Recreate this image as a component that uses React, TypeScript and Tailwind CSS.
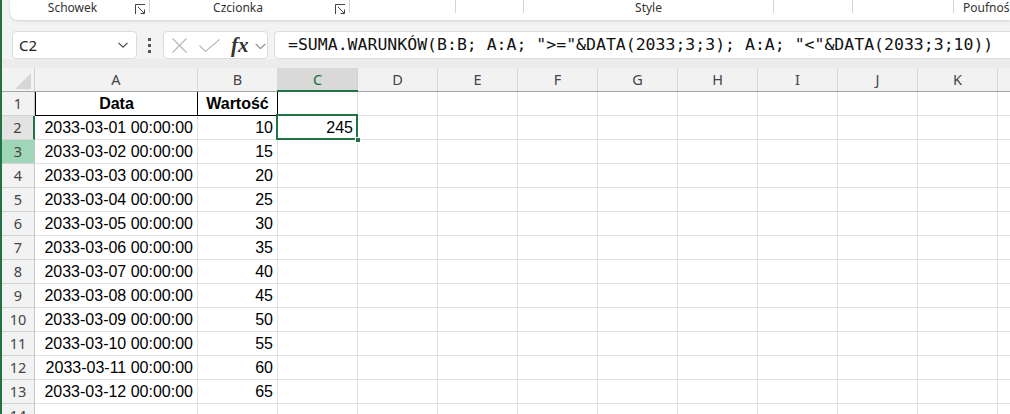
import type { ReactNode } from 'react'

const COLS = [
  { key: 'A', w: 'w-[163px]' },
  { key: 'B', w: 'w-[80px]' },
  { key: 'C', w: 'w-[80px]' },
  { key: 'D', w: 'w-[80px]' },
  { key: 'E', w: 'w-[80px]' },
  { key: 'F', w: 'w-[80px]' },
  { key: 'G', w: 'w-[80px]' },
  { key: 'H', w: 'w-[80px]' },
  { key: 'I', w: 'w-[80px]' },
  { key: 'J', w: 'w-[80px]' },
  { key: 'K', w: 'w-[80px]' },
  { key: 'L', w: 'w-[80px]' },
]

const rows = Array.from({ length: 12 }, (_, i) => ({
  date: `2033-03-${String(i + 1).padStart(2, '0')} 00:00:00`,
  value: 10 + i * 5,
}))

function Launcher() {
  return (
    <svg width="11" height="11" viewBox="0 0 11 11" className="mt-[4px] shrink-0" fill="none" stroke="#444" strokeWidth="1">
      <path d="M0.5 10V0.5H10" />
      <path d="M3 3L9.5 9.5" />
      <path d="M9.5 5.5V9.5H5.5" />
    </svg>
  )
}

function Sep() {
  return <span className="h-[13px] w-px shrink-0 bg-[#d4d4d4]" />
}

function Ribbon() {
  return (
    <div className="ml-[8px] flex h-[20px] shrink-0 items-start overflow-hidden rounded-bl-[8px] bg-white text-[12px] leading-[16px] text-[#333] shadow-[0_1px_3px_rgba(0,0,0,0.14)] font-['Noto_Sans',sans-serif]">
      <div className="w-[125px] shrink-0 text-center">Schowek</div>
      <Launcher />
      <div className="w-[3px] shrink-0" />
      <Sep />
      <div className="w-[176px] shrink-0 text-center">Czcionka</div>
      <div className="w-[9px] shrink-0" />
      <Launcher />
      <div className="w-[3px] shrink-0" />
      <Sep />
      <div className="w-[105px] shrink-0" />
      <Sep />
      <div className="w-[67px] shrink-0" />
      <Sep />
      <div className="w-[249px] shrink-0 text-center">Style</div>
      <Sep />
      <div className="w-[78px] shrink-0" />
      <Sep />
      <div className="w-[100px] shrink-0" />
      <Sep />
      <div className="shrink-0 whitespace-nowrap pl-[9px]">Poufność</div>
    </div>
  )
}

function Chevron({ color, w }: { color: string; w: number }) {
  return (
    <svg width={w} height={w / 2 + 1} viewBox="0 0 10 6" fill="none" stroke={color} strokeWidth="1.1">
      <path d="M0.5 0.8L5 5.2L9.5 0.8" />
    </svg>
  )
}

function FormulaBar() {
  return (
    <div className="mt-[11px] flex h-[28px] shrink-0 items-stretch">
      <div className="ml-[10px] flex w-[125px] shrink-0 items-center justify-between rounded-[4px] border border-[#dcdcdc] bg-white pl-[6px] pr-[8px] text-[15px] text-[#222] font-['Noto_Sans',sans-serif]">
        <span>C2</span>
        <Chevron color="#444" w={10} />
      </div>
      <div className="ml-[11px] flex w-[3px] shrink-0 flex-col items-center justify-center gap-[3px]">
        <span className="h-[3px] w-[3px] bg-[#555]" />
        <span className="h-[3px] w-[3px] bg-[#555]" />
        <span className="h-[3px] w-[3px] bg-[#555]" />
      </div>
      <div className="ml-[12px] flex w-[105px] shrink-0 items-center rounded-[4px] border border-[#dcdcdc] bg-white">
        <svg width="15" height="15" viewBox="0 0 15 15" className="ml-[8px]" stroke="#b5b5b5" strokeWidth="1.1">
          <path d="M0.5 0.5L14.5 14.5M14.5 0.5L0.5 14.5" />
        </svg>
        <svg width="21" height="13" viewBox="0 0 21 13" className="ml-[12px]" fill="none" stroke="#b5b5b5" strokeWidth="1.1">
          <path d="M0.5 6.5L6.5 12.3L20.5 0.5" />
        </svg>
        <span className="ml-[11px] text-[21px] font-bold italic leading-none text-[#333] font-['Liberation_Serif',serif]">fx</span>
        <span className="ml-[6px] mt-[2px]">
          <Chevron color="#888" w={11} />
        </span>
      </div>
      <div className="ml-[6px] flex w-[760px] shrink-0 items-center rounded-l-[4px] border border-[#dcdcdc] bg-white pl-[13px] text-[16.5px] text-[#111] whitespace-pre font-['DejaVu_Sans_Mono',monospace]">
        {'=SUMA.WARUNKÓW(B:B; A:A; ">="&DATA(2033;3;3); A:A; "<"&DATA(2033;3;10))'}
      </div>
    </div>
  )
}

function HeaderRow() {
  return (
    <div className="flex h-[24px] shrink-0 border-b border-[#a6a6a6] bg-[#f2f2f2] text-[14.5px] text-[#444] font-['Noto_Sans',sans-serif]">
      <div className="relative w-[33px] shrink-0 border-r border-[#d0d0d0]">
        <svg width="16" height="16" viewBox="0 0 16 16" className="absolute left-[13px] top-[5px]">
          <path d="M16 0V16H0Z" fill="#d6d6d6" />
        </svg>
      </div>
      {COLS.map((c) =>
        c.key === 'C' ? (
          <div
            key={c.key}
            className={`${c.w} relative flex shrink-0 items-center justify-center border-r border-[#d0d0d0] bg-[#d9d9d9] text-[#1d6b3f]`}
          >
            {c.key}
            <span className="absolute bottom-[-1px] left-[-1px] right-[-1px] h-[2px] bg-[#217346]" />
          </div>
        ) : (
          <div key={c.key} className={`${c.w} flex shrink-0 items-center justify-center border-r border-[#d9d9d9]`}>
            {c.key}
          </div>
        )
      )}
    </div>
  )
}

function RowHead({ n }: { n: number }) {
  const cls =
    n === 2
      ? 'bg-[#e3e3e3] border-r-2 border-r-[#217346]'
      : n === 3
        ? 'bg-[#9fd6b8] border-r border-r-[#c6c6c6]'
        : 'bg-[#f2f2f2] border-r border-r-[#c6c6c6]'
  return (
    <div
      className={`flex w-[33px] shrink-0 items-center justify-center border-b border-b-[#d4d4d4] text-[14.5px] text-[#444] font-['Noto_Sans',sans-serif] ${cls}`}
    >
      {n}
    </div>
  )
}

function Row({ n, children }: { n: number; children: ReactNode }) {
  return (
    <div className="flex h-[24px] shrink-0">
      <RowHead n={n} />
      {children}
    </div>
  )
}

function Cell({ w, children, cls = '' }: { w: string; children?: ReactNode; cls?: string }) {
  return (
    <div className={`${w} flex shrink-0 items-center border-b border-r border-[#e1e1e1] ${cls}`}>{children}</div>
  )
}

export default function App() {
  return (
    <div className="flex h-[414px] w-[1010px] flex-col overflow-hidden border-l-2 border-[#217346] bg-[#f3f3f3]">
      <Ribbon />
      <FormulaBar />
      <div className="h-[9px] shrink-0 bg-[#eeecea]" />
      <div className="flex flex-col bg-white text-[16px] text-black font-['Liberation_Sans',Arial,sans-serif]">
        <HeaderRow />
        <Row n={1}>
          <Cell w="w-[163px]" cls="justify-center font-bold !border-black border-l border-l-black">
            Data
          </Cell>
          <Cell w="w-[80px]" cls="justify-center font-bold !border-black">
            Wartość
          </Cell>
          {COLS.slice(2).map((c) => (
            <Cell key={c.key} w={c.w} />
          ))}
        </Row>
        {rows.map((r, i) => (
          <Row key={i} n={i + 2}>
            <Cell w="w-[163px]" cls="justify-end pr-[4px]">
              {r.date}
            </Cell>
            <Cell w="w-[80px]" cls="justify-end pr-[4px]">
              {r.value}
            </Cell>
            {COLS.slice(2).map((c) =>
              c.key === 'C' && i === 0 ? (
                <Cell key={c.key} w={c.w} cls="relative justify-end pr-[4px]">
                  245
                  <span className="absolute left-[-2px] top-[-2px] h-[26px] w-[82px] border-2 border-[#217346]" />
                  <span className="absolute bottom-[-4px] right-[-4px] h-[6px] w-[6px] border border-white bg-[#217346]" />
                </Cell>
              ) : (
                <Cell key={c.key} w={c.w} />
              )
            )}
          </Row>
        ))}
        <Row n={14}>
          {COLS.map((c) => (
            <Cell key={c.key} w={c.w} />
          ))}
        </Row>
      </div>
    </div>
  )
}
